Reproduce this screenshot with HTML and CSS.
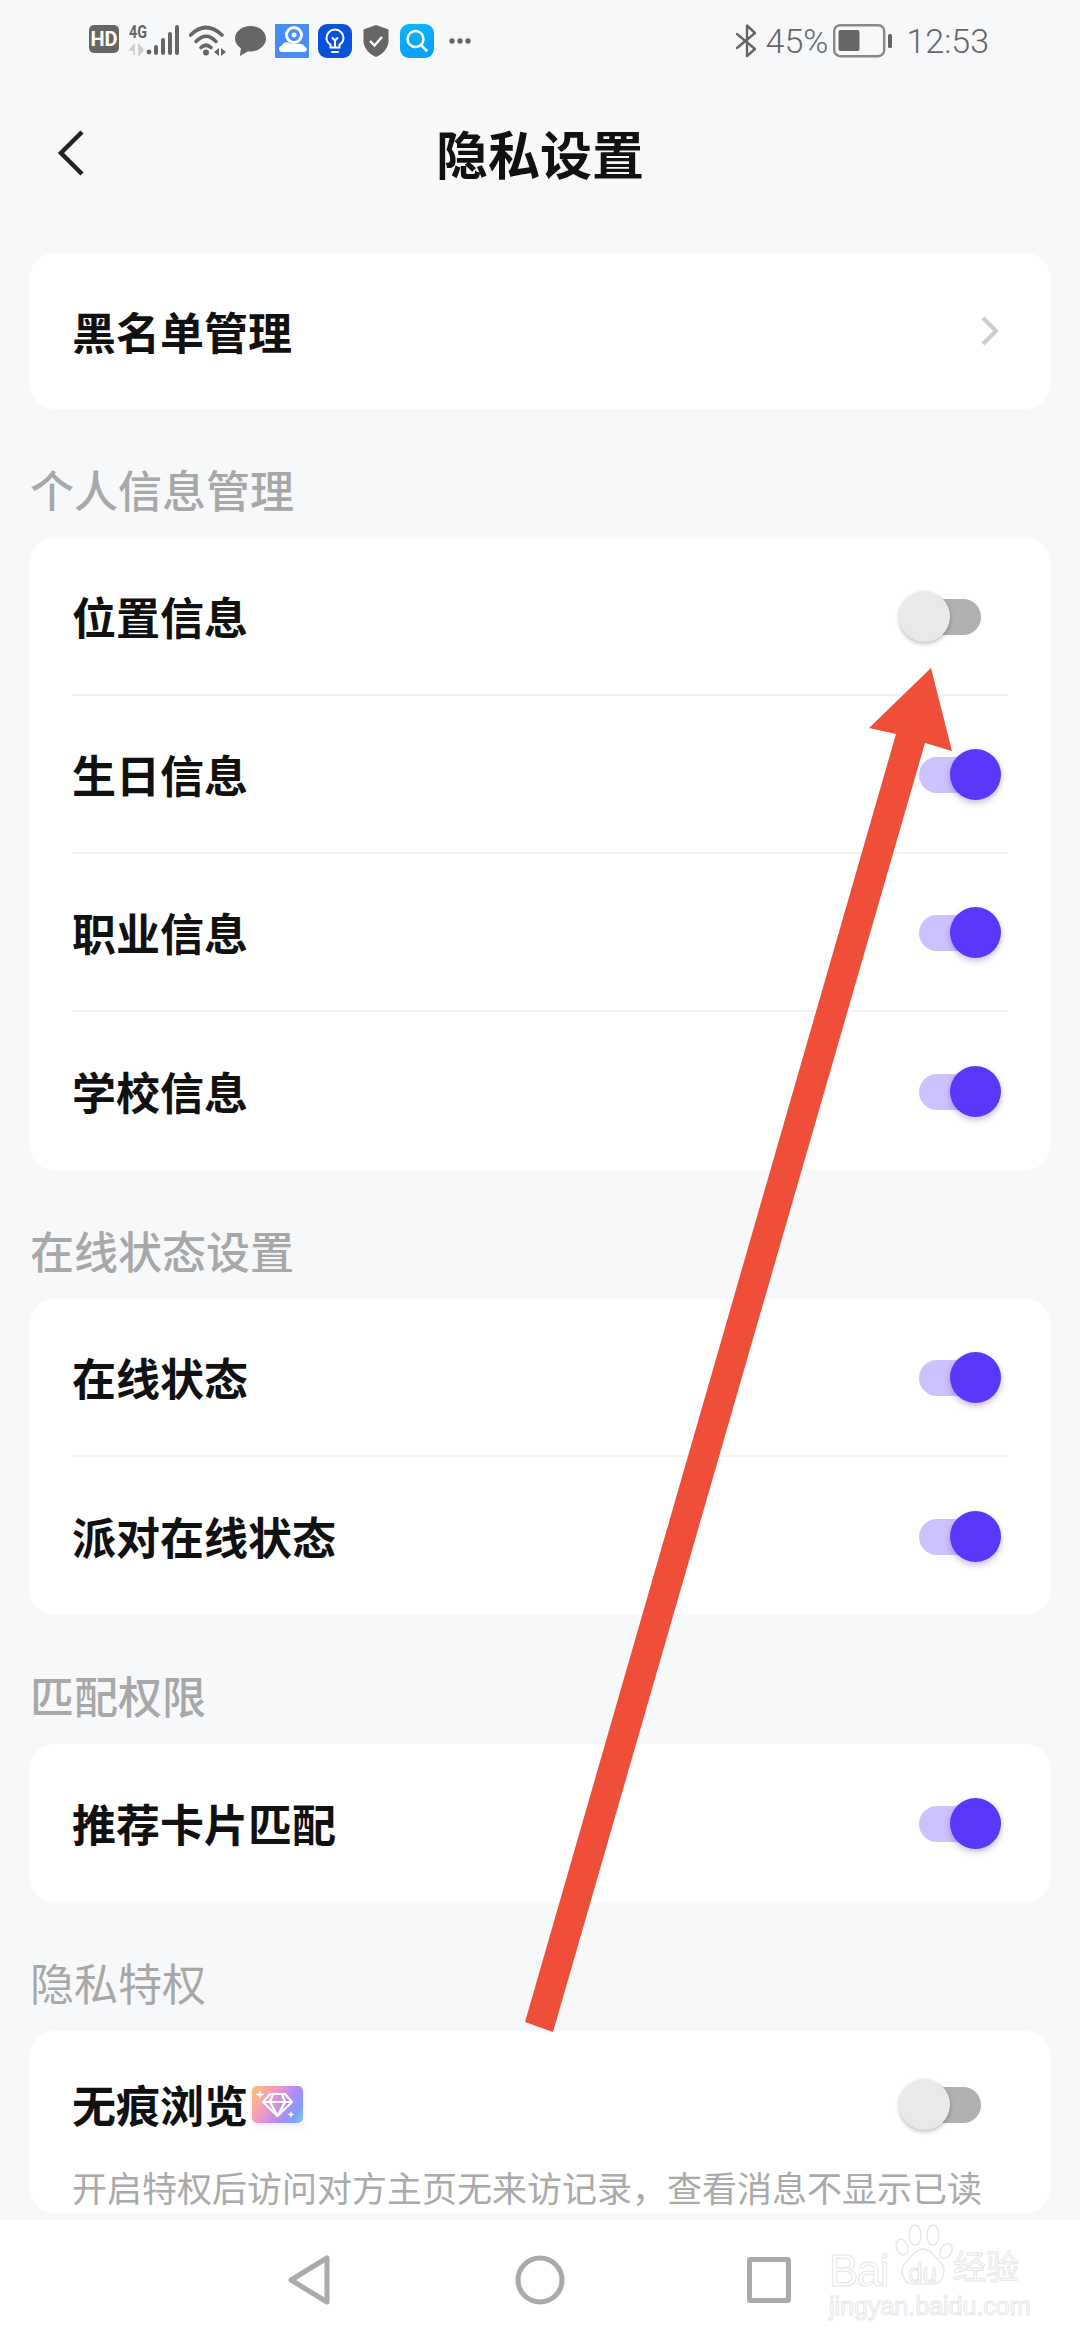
FILE: index.html
```html
<!DOCTYPE html>
<html lang="zh-CN">
<head>
  <meta charset="UTF-8" />
  <meta name="viewport" content="width=device-width, initial-scale=1.0"/>
  <title>隐私设置</title>
  <link rel="stylesheet" href="styles.css">
</head>
<body>
  <div class="screen">
    <div class="status-bar">
      <div class="status-icons">
        <svg width="31" height="30" viewBox="0 0 31 30" class="ic-hd">
          <rect x="0" y="1" width="30" height="28" rx="5" fill="#666"/>
          <text x="15" y="22" text-anchor="middle" class="hd-text">HD</text>
        </svg>
        <svg width="51" height="38" viewBox="0 -4 51 38" class="ic-net">
          <text x="0" y="14" class="net-text" textLength="18" lengthAdjust="spacingAndGlyphs">4G</text>
          <path d="M5 21v10M5 21l-4 5h4zM10 31V21l4 5-4 5z" fill="#ccc" stroke="#ccc" stroke-width="1.5"/>
          <circle cx="20" cy="28" r="2.4" fill="#666"/>
          <rect x="25" y="21" width="4" height="10" rx="2" fill="#666"/>
          <rect x="32" y="14" width="4" height="17" rx="2" fill="#666"/>
          <rect x="39" y="8" width="4" height="23" rx="2" fill="#666"/>
          <rect x="46" y="1" width="4" height="30" rx="2" fill="#666"/>
        </svg>
        <svg width="37" height="34" viewBox="0 0 37 34" fill="none" stroke="#666" stroke-width="3.6" stroke-linecap="round">
          <path d="M1.5 11Q17 -4 33 11"/>
          <path d="M7 17.5Q17 7 27 17.5"/>
          <path d="M12 23.5Q17 19 22 23.5"/>
          <circle cx="17" cy="28.5" r="3" fill="#666" stroke="none"/>
          <path d="M30 24v8l-5-4zM32 24v8l5-4z" fill="#666" stroke="none"/>
        </svg>
        <svg width="31" height="34" viewBox="0 0 31 34">
          <path d="M15.5 2C7 2 0 7.500 0 14.500c0 4 2.200 7.500 5.800 9.800L5 32l8-4.800c.8.100 1.700.2 2.500.2C24 27.400 31 21.600 31 14.500S24 2 15.500 2z" fill="#666"/>
        </svg>
        <svg width="34" height="34" viewBox="0 0 34 34">
          <rect width="34" height="34" fill="#4a8cf5"/>
          <circle cx="19" cy="11" r="7.500" fill="none" stroke="#fff" stroke-width="3"/>
          <circle cx="19" cy="11" r="2.500" fill="#fff"/>
          <path d="M7 28c-4 0-4-6 0-6.500C9 17 14 18 16 20h6c3-1 7 0 8 3 3 1 2 5-1 5z" fill="#fff"/>
        </svg>
        <svg width="34" height="34" viewBox="0 0 34 34" fill="none" stroke="#fff" stroke-width="2" stroke-linecap="round">
          <rect width="34" height="34" rx="9" fill="#0a52de" stroke="none"/>
          <path d="M12.500 23.500v-3C10 19 8.500 16.500 8.500 14a8.500 8.500 0 0 1 17 0c0 2.500-1.500 5-4 6.500v3z"/>
          <path d="M14 28h6M17 23v-7M14.500 14l2.500 2.500 2.500-2.500"/>
        </svg>
        <svg width="30" height="34" viewBox="0 0 30 34">
          <path d="M15 1 27.500 5.500V17C27.500 24 22 30 15 33 8 30 2.500 24 2.500 17V5.500z" fill="#666"/>
          <path d="M9 17l4.500 4.500L21 13" fill="none" stroke="#fff" stroke-width="2.400"/>
        </svg>
        <svg width="34" height="34" viewBox="0 0 34 34" fill="none" stroke="#fff" stroke-width="2.500" stroke-linecap="round">
          <defs>
            <linearGradient id="searchbg" x1="0" y1="0" x2="0" y2="1">
              <stop offset="0" stop-color="#0cb4fb"/>
              <stop offset="1" stop-color="#06a0f6"/>
            </linearGradient>
          </defs>
          <rect width="34" height="34" rx="9" fill="url(#searchbg)" stroke="none"/>
          <circle cx="15.500" cy="15" r="8"/>
          <path d="M21.500 21.500l5 5"/>
        </svg>
        <svg width="28" height="34" viewBox="0 0 28 34" fill="#666">
          <circle cx="9" cy="17" r="2.700"/>
          <circle cx="17" cy="17" r="2.700"/>
          <circle cx="25" cy="17" r="2.700"/>
        </svg>
      </div>
      <div class="status-right">
        <svg width="22" height="34" viewBox="0 0 22 34" fill="none" stroke="#666" stroke-width="2.400" stroke-linejoin="round" stroke-linecap="round">
          <path d="M1 24 19 9 11 1.500V32L19 25 1 10"/>
        </svg>
        <span class="battery-pct">45%</span>
        <svg width="60" height="34" viewBox="0 0 60 34" class="battery">
          <rect x="1.200" y="1.200" width="50" height="31" rx="6" fill="none" stroke="#888" stroke-width="2.400"/>
          <rect x="5.500" y="6" width="21" height="21" rx="2" fill="#666"/>
          <rect x="55" y="10" width="4" height="14" rx="1.500" fill="#666"/>
        </svg>
        <span class="clock">12:53</span>
      </div>
    </div>

    <div class="top-bar">
      <svg class="back" width="28" height="46" viewBox="0 0 28 46" fill="none" stroke="#222" stroke-width="4.500">
        <path d="M25 2 4 23l21 21"/>
      </svg>
      <h1>隐私设置</h1>
    </div>

    <div class="content">
      <div class="card first">
        <div class="row short">
          <span class="row-label">黑名单管理</span>
          <svg class="chevron" width="20" height="32" viewBox="0 0 20 32" fill="none" stroke="#ccc" stroke-width="4">
            <path d="M3 3l13 13L3 29"/>
          </svg>
        </div>
      </div>

      <div class="section-label">个人信息管理</div>
      <div class="card">
        <div class="row">
          <span class="row-label">位置信息</span>
          <div class="switch off"><span class="track"></span><span class="thumb"></span></div>
        </div>
        <div class="row">
          <span class="row-label">生日信息</span>
          <div class="switch on"><span class="track"></span><span class="thumb"></span></div>
        </div>
        <div class="row">
          <span class="row-label">职业信息</span>
          <div class="switch on"><span class="track"></span><span class="thumb"></span></div>
        </div>
        <div class="row">
          <span class="row-label">学校信息</span>
          <div class="switch on"><span class="track"></span><span class="thumb"></span></div>
        </div>
      </div>

      <div class="section-label">在线状态设置</div>
      <div class="card">
        <div class="row">
          <span class="row-label">在线状态</span>
          <div class="switch on"><span class="track"></span><span class="thumb"></span></div>
        </div>
        <div class="row">
          <span class="row-label">派对在线状态</span>
          <div class="switch on"><span class="track"></span><span class="thumb"></span></div>
        </div>
      </div>

      <div class="section-label">匹配权限</div>
      <div class="card">
        <div class="row">
          <span class="row-label">推荐卡片匹配</span>
          <div class="switch on"><span class="track"></span><span class="thumb"></span></div>
        </div>
      </div>

      <div class="section-label light">隐私特权</div>
      <div class="card">
        <div class="row tall">
          <span class="row-label">无痕浏览</span>
          <span class="vip-badge">
            <svg width="51" height="37" viewBox="0 0 51 37" fill="none" stroke="#fff" stroke-width="2.200" stroke-linejoin="round">
              <path d="M18 8h15l7 8-14.500 14L11 16z"/>
              <path d="M11 16h29M21 8l-3 8 7.500 14L33 16l-3-8"/>
              <path d="M8 4l1.200 3.300 3.300 1.200-3.300 1.200L8 13l-1.200-3.300-3.300-1.200 3.300-1.200zM39 25l1 2.500 2.500 1-2.500 1-1 2.500-1-2.500-2.500-1 2.500-1z" fill="#fff" stroke="none"/>
            </svg>
          </span>
          <div class="switch off"><span class="track"></span><span class="thumb"></span></div>
        </div>
        <p class="row-desc">开启特权后访问对方主页无来访记录，查看消息不显示已读</p>
      </div>
    </div>

    <div class="nav-bar">
      <svg width="44" height="50" viewBox="0 0 44 50" fill="none" stroke="#aaa" stroke-width="5" stroke-linejoin="round">
        <path d="M40 3v44L4 25z"/>
      </svg>
      <svg width="50" height="50" viewBox="0 0 50 50" fill="none" stroke="#aaa" stroke-width="5">
        <circle cx="25" cy="25" r="22"/>
      </svg>
      <svg width="44" height="46" viewBox="0 0 44 46" fill="none" stroke="#aaa" stroke-width="5" stroke-linejoin="round">
        <rect x="2.500" y="2.500" width="39" height="41" rx="1"/>
      </svg>
    </div>

    <!-- arrow and watermark were painted on top of the screenshot -->
    <svg class="arrow" width="1080" height="2340" viewBox="0 0 1080 2340">
      <polygon points="931,668 952,751 925,743 553,2032 525,2022 896,734 869,728" fill="#ef4f38"/>
    </svg>
    <div class="watermark">
      <svg class="paw" width="62" height="62" viewBox="0 0 62 62" fill="#fff" stroke="#e8e8e8" stroke-width="1.500">
        <ellipse cx="9" cy="23" rx="5.500" ry="8" transform="rotate(-20 9 23)"/>
        <ellipse cx="22" cy="11" rx="6" ry="10"/>
        <ellipse cx="40" cy="11" rx="6" ry="10"/>
        <ellipse cx="53" cy="27" rx="5.500" ry="8" transform="rotate(30 53 27)"/>
        <path d="M30 25c8 0 12 8 18 14 6 6 2 21-8 21H20c-10 0-14-15-8-21 6-6 10-14 18-14z"/>
      </svg>
      <span class="wm-bai">Bai</span>
      <span class="wm-du">du</span>
      <span class="wm-cn">经验</span>
      <span class="wm-url">jingyan.baidu.com</span>
    </div>
  </div>
</body>
</html>
```

FILE: styles.css
```css
* {
  box-sizing: border-box;
}
body {
  margin: 0;
  font-family: "Noto Sans CJK SC", "Noto Sans", sans-serif;
  background: #f7f8fa;
}
.screen {
  position: relative;
  width: 1080px;
  height: 2340px;
  display: flex;
  flex-direction: column;
  overflow: hidden;
}

/* status bar */
.status-bar {
  height: 80px;
  flex: none;
  display: flex;
  align-items: flex-start;
  justify-content: space-between;
  padding: 24px 91px 0 89px;
}
.status-icons {
  display: flex;
  gap: 9px;
}
.ic-net {
  margin-top: -4px;
}
.hd-text {
  font-family: Roboto, sans-serif;
  font-weight: 700;
  font-size: 20px;
  fill: #fff;
}
.net-text {
  font-family: Roboto, sans-serif;
  font-weight: 700;
  font-size: 18px;
  fill: #666;
}
.status-right {
  display: flex;
  align-items: center;
  height: 34px;
  color: #666;
  font-family: Roboto, sans-serif;
  font-weight: 300;
  font-size: 34px;
}
.battery-pct {
  margin-left: 8px;
}
.battery {
  margin-left: 5px;
}
.clock {
  margin-left: 13px;
}

/* header */
.top-bar {
  position: relative;
  height: 150px;
  flex: none;
  display: flex;
  align-items: center;
  justify-content: center;
}
.top-bar h1 {
  margin: 0 0 6px;
  font-size: 52px;
  font-weight: 700;
  color: #111;
}
.back {
  position: absolute;
  left: 57px;
  top: 50px;
}

/* list */
.content {
  flex: 1;
  min-height: 0;
  overflow: hidden;
  padding: 23px 30px 0;
}
.card {
  background: #fff;
  border-radius: 24px;
  padding: 0 42px;
}
.section-label {
  margin: 57px 0 26px;
  line-height: 46px;
  font-size: 44px;
  font-weight: 500;
  color: #a8a8a8;
}
.section-label.light {
  font-weight: 400;
}
.row {
  height: 158px;
  display: flex;
  align-items: center;
  border-bottom: 2px solid #f3f3f5;
}
.row:last-child {
  border-bottom: none;
}
.row.short {
  height: 156px;
}
.row.tall {
  height: 146px;
  margin-bottom: -16px;
  border-bottom: none;
}
.row-label {
  font-size: 44px;
  font-weight: 700;
  color: #111;
}
.chevron {
  margin-left: auto;
  margin-right: 8px;
}
.vip-badge {
  width: 51px;
  height: 37px;
  margin-left: 4px;
  border-radius: 5px;
  background: linear-gradient(120deg, #fcc46a 0%, #f29ac4 35%, #b08af8 65%, #7fa0fb 85%, #7cd0f8 100%);
  box-shadow: 0 3px 6px rgba(150,120,240,0.15);
  display: flex;
}

/* switches */
.switch {
  position: relative;
  width: 102px;
  height: 51px;
  margin-left: auto;
  margin-right: 7px;
}
.track {
  position: absolute;
  top: 8px;
  width: 72px;
  height: 36px;
  border-radius: 18px;
}
.thumb {
  position: absolute;
  top: 0;
  width: 51px;
  height: 51px;
  border-radius: 50%;
}
.switch.off .track {
  left: 10px;
  background: #b0b0b0;
}
.switch.off .thumb {
  left: 0;
  background: #e9e9e9;
  box-shadow: 0 2px 4px rgba(0,0,0,0.25);
}
.switch.on .track {
  left: 20px;
  background: #cdc2fd;
}
.switch.on .thumb {
  left: 51px;
  background: #5b36fb;
  box-shadow: 0 3px 6px rgba(60,40,160,0.3);
}
.row-desc {
  margin: 0;
  font-size: 35px;
  line-height: 52px;
  color: #aaa;
  white-space: nowrap;
}

/* nav */
.nav-bar {
  position: relative;
  height: 120px;
  flex: none;
  background: #fff;
  display: flex;
  align-items: center;
}
.nav-bar svg {
  position: absolute;
  top: 35px;
}
.nav-bar svg:nth-child(1) {
  left: 287px;
}
.nav-bar svg:nth-child(2) {
  left: 515px;
}
.nav-bar svg:nth-child(3) {
  left: 747px;
  top: 37px;
}

/* overlays */
.arrow {
  position: absolute;
  left: 0;
  top: 0;
  pointer-events: none;
}
.watermark {
  position: absolute;
  left: 826px;
  top: 2222px;
  width: 200px;
  height: 100px;
  color: #fff;
  font-family: "Liberation Sans", sans-serif;
  -webkit-text-stroke: 1px #e6e6e6;
}
.watermark span {
  position: absolute;
  line-height: 1;
  white-space: nowrap;
}
.paw {
  position: absolute;
  left: 67px;
  top: 2px;
}
.wm-bai {
  left: 3px;
  top: 27px;
  font-size: 44px;
  letter-spacing: -1.5px;
}
.wm-du {
  left: 82px;
  top: 38px;
  font-size: 26px;
}
.wm-cn {
  left: 127px;
  top: 27px;
  font-size: 33px;
  font-family: "Noto Sans CJK SC", sans-serif;
}
.wm-url {
  left: 3px;
  top: 72px;
  font-size: 25px;
}
```
